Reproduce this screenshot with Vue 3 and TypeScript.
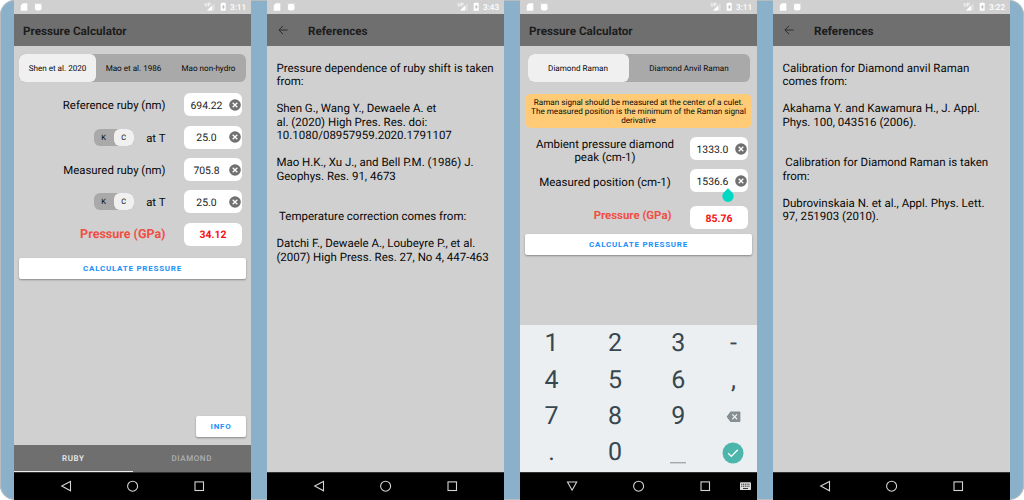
<script setup lang="ts">
interface Phone {
  id: string
  time: string
  title: string
  kind: 'ruby' | 'diamond' | 'refs'
  text?: string
}

const phones: Phone[] = [
  { id: 'ruby', time: '3:11', title: 'Pressure Calculator', kind: 'ruby' },
  {
    id: 'ruby-refs',
    time: '3:43',
    title: 'References',
    kind: 'refs',
    text: 'Pressure dependence of ruby shift is taken\nfrom:\n\nShen G., Wang Y., Dewaele A. et\nal. (2020) High Pres. Res. doi:\n10.1080/08957959.2020.1791107\n\nMao H.K., Xu J., and Bell P.M. (1986) J.\nGeophys. Res. 91, 4673\n\n\n Temperature correction comes from:\n\nDatchi F., Dewaele A., Loubeyre P., et al.\n(2007) High Press. Res. 27, No 4, 447-463',
  },
  { id: 'diamond', time: '3:11', title: 'Pressure Calculator', kind: 'diamond' },
  {
    id: 'diamond-refs',
    time: '3:22',
    title: 'References',
    kind: 'refs',
    text: 'Calibration for Diamond anvil Raman\ncomes from:\n\nAkahama Y. and Kawamura H., J. Appl.\nPhys. 100, 043516 (2006).\n\n\n Calibration for Diamond Raman is taken\nfrom:\n\nDubrovinskaia N. et al., Appl. Phys. Lett.\n97, 251903 (2010).',
  },
]

const rubyRows = [
  { label: 'Reference ruby (nm)', unit: false, value: '694.22' },
  { label: 'at T', unit: true, value: '25.0' },
  { label: 'Measured ruby (nm)', unit: false, value: '705.8' },
  { label: 'at T', unit: true, value: '25.0' },
]

const keys = ['1', '2', '3', '-', '4', '5', '6', ',', '7', '8', '9', 'del', '.', '0', 'space', 'ok']
</script>

<template>
  <div class="stage">
    <section v-for="p in phones" :key="p.id" class="phone">
      <div class="status">
        <svg class="status-left" width="30" height="14" viewBox="0 0 30 14">
          <path d="M9 3.2h4.3v7.5H6.8V5.3z" fill="#fff" />
          <path d="M21.5 4.2 20.8 3.2M27.5 3.2l-.7 1" stroke="#fff" stroke-width=".7" />
          <rect x="20.9" y="3.7" width="6.6" height="6.7" rx="2.2" fill="#fff" />
        </svg>
        <svg class="status-right" width="24" height="14" viewBox="0 0 24 14">
          <path d="M1.2 3v2.4q0 .9.9.9t.9-.9V3M4.4 6.5V3h1q1 0 1 1t-1 1h-1" fill="none" stroke="#fff" stroke-width=".7" />
          <path d="M10.5 3.2v7.3H3z" fill="#fff" opacity=".35" />
          <path d="M8 5.6v4.9H3z" fill="#fff" />
          <path d="M17.7 3h1v-.6h1.8V3h1.2v7.8h-5V3z" fill="#fff" />
          <path d="M19.8 4.4 17.8 7.3h1.1v2.2l2-3h-1.1z" fill="#bbb" />
        </svg>
        <span class="time">{{ p.time }}</span>
      </div>

      <header class="appbar">
        <svg v-if="p.kind === 'refs'" class="back" width="10" height="10" viewBox="0 0 10 10">
          <path d="M9.6 5H1M5 .9.9 5 5 9.1" fill="none" stroke="#2c2c2c" stroke-width="1" />
        </svg>
        <h1>{{ p.title }}</h1>
      </header>

      <main v-if="p.kind === 'refs'" class="refs">{{ p.text }}</main>

      <main v-else-if="p.kind === 'ruby'" class="body">
        <div class="segments three">
          <span class="seg on">Shen et al. 2020</span>
          <span class="seg">Mao et al. 1986</span>
          <span class="seg">Mao non-hydro</span>
        </div>
        <div class="rows">
          <div v-for="(r, i) in rubyRows" :key="i" class="row">
            <span v-if="r.unit" class="unit"><i>K</i><i class="on">C</i></span>
            <span class="label" :class="{ temp: r.unit }">{{ r.label }}</span>
            <span class="field">
              <b class="num">{{ r.value }}</b>
              <svg class="clear" width="12" height="12" viewBox="0 0 12 12">
                <circle cx="6" cy="6" r="5.8" fill="#707070" />
                <path d="M3.7 3.7l4.6 4.6M8.3 3.7 3.7 8.3" stroke="#fff" stroke-width="1.3" />
              </svg>
            </span>
          </div>
          <div class="row">
            <span class="label result">Pressure (GPa)</span>
            <span class="field answer">34.12</span>
          </div>
        </div>
        <button class="btn calc">CALCULATE PRESSURE</button>
        <button class="btn info">INFO</button>
        <nav class="tabs"><span class="on">RUBY</span><span>DIAMOND</span></nav>
      </main>

      <main v-else class="body">
        <div class="segments two">
          <span class="seg on">Diamond Raman</span>
          <span class="seg">Diamond Anvil Raman</span>
        </div>
        <div class="notice">Raman signal should be measured at the center of a culet.<br />The measured position is the minimum of the Raman signal<br />derivative</div>
        <div class="drows">
          <div class="drow first">
            <span class="dlabel">Ambient pressure diamond<br />peak (cm-1)</span>
            <span class="field">
              <b class="num">1333.0</b>
              <svg class="clear" width="12" height="12" viewBox="0 0 12 12">
                <circle cx="6" cy="6" r="5.8" fill="#707070" />
                <path d="M3.7 3.7l4.6 4.6M8.3 3.7 3.7 8.3" stroke="#fff" stroke-width="1.3" />
              </svg>
            </span>
          </div>
          <div class="drow second">
            <span class="dlabel measured">Measured position (cm-1)</span>
            <span class="field">
              <b class="num">1536.6</b>
              <svg class="clear" width="12" height="12" viewBox="0 0 12 12">
                <circle cx="6" cy="6" r="5.8" fill="#707070" />
                <path d="M3.7 3.7l4.6 4.6M8.3 3.7 3.7 8.3" stroke="#fff" stroke-width="1.3" />
              </svg>
              <svg class="handle" width="12" height="14" viewBox="0 0 12 14">
                <path d="M6 .2 10 4.2A5.7 5.7 0 1 1 2 4.2z" fill="#00d8c4" />
              </svg>
            </span>
          </div>
          <div class="drow third">
            <span class="label result dresult">Pressure (GPa)</span>
            <span class="field answer">85.76</span>
          </div>
        </div>
        <button class="btn calc dcalc">CALCULATE PRESSURE</button>
        <div class="keyboard">
          <span v-for="k in keys" :key="k" class="key">
            <svg v-if="k === 'del'" width="15" height="12" viewBox="0 0 15 12">
              <path d="M4.5.6H13.4q1 0 1 1v8.3q0 1-1 1H4.5L.6 5.8z" fill="#848e93" />
              <path d="M6.3 3.4l4.8 4.8M11.1 3.4 6.3 8.2" stroke="#ebeff2" stroke-width="1.3" />
            </svg>
            <svg v-else-if="k === 'ok'" width="22" height="22" viewBox="0 0 22 22">
              <circle cx="11" cy="11" r="10.5" fill="#4db6ac" />
              <path d="M6.2 11.3l3.1 3.1 6.5-6.7" fill="none" stroke="#fff" stroke-width="1.3" />
            </svg>
            <svg v-else-if="k === 'space'" width="16" height="22" viewBox="0 0 16 22">
              <path d="M0 20.8h16" stroke="#848e93" stroke-width="1" />
            </svg>
            <template v-else>{{ k }}</template>
          </span>
        </div>
      </main>

      <footer class="sysnav">
        <svg width="237" height="28" viewBox="0 0 237 28">
          <g fill="none" stroke="#d4d4d4" stroke-width="1.1">
            <path v-if="p.kind === 'diamond'" d="M47.5 10h9.2l-4.6 8.2z" />
            <path v-else d="M56.5 9.4v9.4l-8.8-4.7z" />
            <circle cx="118.6" cy="14.2" r="5" />
            <rect x="181" y="9.9" width="8.5" height="8.6" />
          </g>
          <g v-if="p.kind === 'diamond'">
            <rect x="220" y="10.3" width="11" height="7.8" rx=".9" fill="#ddd" />
            <path d="M221.2 12.2h8.8M221.2 14.2h8.8" stroke="#222" stroke-width="1" stroke-dasharray="1.1 .7" />
            <path d="M223 16.5h5" stroke="#222" stroke-width=".9" />
          </g>
        </svg>
      </footer>
    </section>
  </div>
</template>

<style>
body {
  margin: 0;
  background: #fff;
}
</style>

<style scoped>
* {
  box-sizing: border-box;
}
.stage {
  width: 1024px;
  height: 500px;
  display: flex;
  gap: 16px;
  padding: 0 14px;
  overflow: hidden;
  border-radius: 15px;
  background: #8ab1c9;
  box-shadow: inset 0 0 0 1px #b9bcbe;
  font-family: Roboto, sans-serif;
  text-rendering: geometricPrecision;
  color: #080808;
}
.phone {
  width: 237px;
  height: 500px;
  flex: none;
  display: flex;
  flex-direction: column;
  background: #d0d0d0;
}
.status {
  height: 14px;
  flex: none;
  display: flex;
  align-items: center;
}
.status-right {
  margin-left: auto;
  margin-right: 2px;
}
.time {
  width: 21px;
  padding-top: 1px;
  font-size: 8.2px;
  font-weight: 500;
  line-height: 14px;
  color: #fff;
}
.appbar {
  height: 32px;
  flex: none;
  display: flex;
  align-items: center;
  padding-left: 9px;
  background: #6f6f6f;
}
.back {
  margin: 0 20px 0 2px;
}
h1 {
  margin: 0;
  padding-top: 1px;
  font-size: 11.7px;
  line-height: 32px;
  font-weight: 700;
  white-space: nowrap;
  color: #1c1c1c;
}
.refs {
  flex: 1;
  padding: 16px 0 0 9.4px;
  font-size: 11.5px;
  line-height: 13.48px;
  white-space: pre;
}
.body {
  flex: 1;
  display: flex;
  flex-direction: column;
  min-height: 0;
}
.segments {
  flex: none;
  display: flex;
  height: 28px;
  background: #a9a9a9;
  border-radius: 6px;
  font-size: 8.1px;
  line-height: 29px;
  text-align: center;
  overflow: hidden;
}
.three {
  margin: 7.5px 5px 0;
}
.two {
  margin: 7.5px 7.5px 0;
}
.seg {
  flex: 1;
  white-space: nowrap;
}
.seg.on {
  background: #f0f0f0;
  border-radius: 6px;
}
.three .seg.on {
  flex: none;
  width: 77px;
}
.two .seg.on {
  flex: none;
  width: 101px;
}
.rows {
  display: grid;
  grid-auto-rows: 32.3px;
  margin-top: 7.3px;
}
.row,
.drow {
  display: flex;
  align-items: center;
  justify-content: flex-end;
  padding-right: 9px;
}
.label {
  margin-right: 18.5px;
  padding-top: 1px;
  font-size: 11.4px;
  white-space: nowrap;
}
.temp {
  margin-left: 12.5px;
}
.result {
  color: #f04e43;
  font-weight: 700;
  font-size: 12.5px;
}
.unit {
  display: flex;
  width: 40px;
  height: 17px;
  overflow: hidden;
  border-radius: 6px;
  background: #a9a9a9;
  font-size: 7.5px;
  line-height: 17px;
  text-align: center;
}
.unit i {
  width: 20px;
  font-style: normal;
}
.unit .on {
  background: #f0f0f0;
  border-radius: 6px;
}
.field {
  position: relative;
  flex: none;
  display: flex;
  align-items: center;
  width: 58px;
  height: 23px;
  border-radius: 6px;
  background: #fff;
  padding-right: 1px;
  font-size: 10.4px;
}
.num {
  flex: 1;
  padding-top: 1px;
  font-weight: 400;
  text-align: center;
  color: #222;
}
.answer {
  justify-content: center;
  padding: 1px 0 0;
  color: #f80f14;
  font-weight: 700;
  font-size: 10.4px;
}
.btn {
  flex: none;
  display: block;
  border: 0;
  padding: 0;
  height: 21px;
  border-radius: 2px;
  background: #fff;
  box-shadow: 0 1px 2px rgba(0, 0, 0, 0.35);
  color: #2090fb;
  font: 700 8px/22px Roboto, sans-serif;
  letter-spacing: 0.75px;
}
.calc {
  margin: 8px 5px 0;
}
.info {
  width: 50px;
  margin: auto 5px 8px auto;
}
.tabs {
  flex: none;
  display: flex;
  height: 27px;
  background: #6f6f6f;
  color: #b0b0b0;
  font-size: 8px;
  font-weight: 500;
  letter-spacing: 0.6px;
  line-height: 28px;
  text-align: center;
}
.tabs span {
  flex: 1;
}
.tabs .on {
  color: #eee;
  border-bottom: 1px solid #eee;
}
.notice {
  flex: none;
  height: 34px;
  margin: 12px 5px 0;
  padding-top: 4px;
  border-radius: 6px;
  background: #ffcb76;
  font-size: 8.15px;
  line-height: 9.3px;
  text-align: center;
  white-space: nowrap;
}
.drows {
  flex: none;
}
.drow {
  align-items: flex-start;
}
.first {
  height: 32px;
  margin-top: 9.5px;
}
.second {
  height: 37px;
}
.third {
  height: 23px;
}
.dlabel {
  width: 170px;
  padding-top: 0.7px;
  font-size: 11.5px;
  line-height: 13.5px;
  text-align: center;
}
.measured {
  padding-top: 7px;
}
.dresult {
  padding-top: 0;
  font-size: 11.4px;
  line-height: 18px;
}
.handle {
  position: absolute;
  left: 32.4px;
  top: 18.5px;
  z-index: 1;
}
.dcalc {
  margin-top: 5px;
}
.keyboard {
  flex: none;
  height: 147px;
  margin-top: auto;
  padding-top: 0.8px;
  display: grid;
  grid-template-columns: 63.3px 63.3px 63.3px 47.1px;
  grid-template-rows: repeat(4, 36.3px);
  background: #ebeff2;
  color: #37474f;
  font-size: 25px;
}
.key {
  display: flex;
  align-items: center;
  justify-content: center;
}
.sysnav {
  flex: none;
  height: 28px;
  background: #000;
  border-top: 1px solid #333;
}
.sysnav svg {
  display: block;
  margin-top: -1px;
}
</style>
